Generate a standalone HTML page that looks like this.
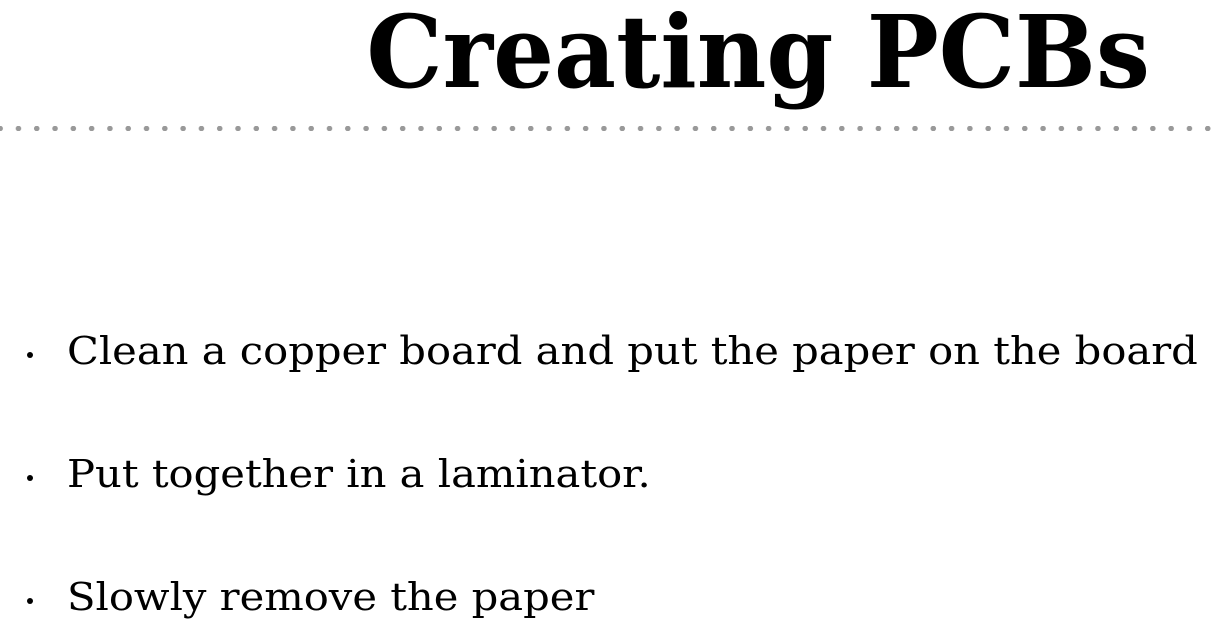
<!DOCTYPE html>
<html><head><style>
html,body{margin:0;padding:0;background:#fff;width:1222px;height:641px;overflow:hidden;position:relative}
.t{position:absolute;right:72px;top:-8px;font-family:"DejaVu Serif","Liberation Serif",serif;font-weight:bold;font-size:100px;line-height:120px;color:#000;white-space:nowrap;transform:scaleX(0.958);transform-origin:right top}
.dots{position:absolute;left:-9px;top:126px;width:1240px;height:5px;background-image:radial-gradient(circle,#999 2.5px,transparent 3px);background-size:18.3px 5px}
.b{position:absolute;left:67px;font-family:"DejaVu Serif","Liberation Serif",serif;font-size:38px;color:#000;white-space:nowrap;line-height:46px;transform:scaleX(1.096);transform-origin:left top}
.d{position:absolute;left:27px;width:6px;height:6px;border-radius:50%;background:#000}
</style></head><body>
<div class="t">Creating PCBs</div>
<div class="dots"></div>
<div class="d" style="top:352px"></div><div class="b" style="top:328px">Clean a copper board and put the paper on the board</div>
<div class="d" style="top:475px"></div><div class="b" style="top:451px">Put together in a laminator.</div>
<div class="d" style="top:598px"></div><div class="b" style="top:574px">Slowly remove the paper</div>
</body></html>
